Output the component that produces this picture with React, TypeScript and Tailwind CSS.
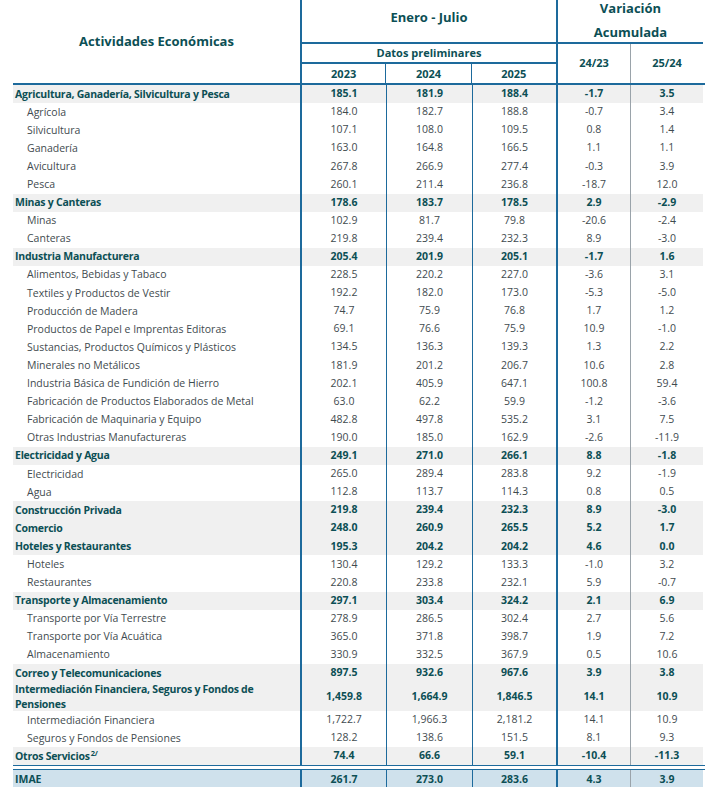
import React from 'react'

type Row = {
  name: string
  v: [string, string, string, string, string]
  bold?: boolean
  sup?: string
  tall?: boolean
}

const rows: Row[] = [
  { name: 'Agricultura, Ganadería, Silvicultura y Pesca', v: ['185.1', '181.9', '188.4', '-1.7', '3.5'], bold: true },
  { name: 'Agrícola', v: ['184.0', '182.7', '188.8', '-0.7', '3.4'] },
  { name: 'Silvicultura', v: ['107.1', '108.0', '109.5', '0.8', '1.4'] },
  { name: 'Ganadería', v: ['163.0', '164.8', '166.5', '1.1', '1.1'] },
  { name: 'Avicultura', v: ['267.8', '266.9', '277.4', '-0.3', '3.9'] },
  { name: 'Pesca', v: ['260.1', '211.4', '236.8', '-18.7', '12.0'] },
  { name: 'Minas y Canteras', v: ['178.6', '183.7', '178.5', '2.9', '-2.9'], bold: true },
  { name: 'Minas', v: ['102.9', '81.7', '79.8', '-20.6', '-2.4'] },
  { name: 'Canteras', v: ['219.8', '239.4', '232.3', '8.9', '-3.0'] },
  { name: 'Industria Manufacturera', v: ['205.4', '201.9', '205.1', '-1.7', '1.6'], bold: true },
  { name: 'Alimentos, Bebidas y Tabaco', v: ['228.5', '220.2', '227.0', '-3.6', '3.1'] },
  { name: 'Textiles y Productos de Vestir', v: ['192.2', '182.0', '173.0', '-5.3', '-5.0'] },
  { name: 'Producción de Madera', v: ['74.7', '75.9', '76.8', '1.7', '1.2'] },
  { name: 'Productos de Papel e Imprentas Editoras', v: ['69.1', '76.6', '75.9', '10.9', '-1.0'] },
  { name: 'Sustancias, Productos Químicos y Plásticos', v: ['134.5', '136.3', '139.3', '1.3', '2.2'] },
  { name: 'Minerales no Metálicos', v: ['181.9', '201.2', '206.7', '10.6', '2.8'] },
  { name: 'Industria Básica de Fundición de Hierro', v: ['202.1', '405.9', '647.1', '100.8', '59.4'] },
  { name: 'Fabricación de Productos Elaborados de Metal', v: ['63.0', '62.2', '59.9', '-1.2', '-3.6'] },
  { name: 'Fabricación de Maquinaria y Equipo', v: ['482.8', '497.8', '535.2', '3.1', '7.5'] },
  { name: 'Otras Industrias Manufactureras', v: ['190.0', '185.0', '162.9', '-2.6', '-11.9'] },
  { name: 'Electricidad y Agua', v: ['249.1', '271.0', '266.1', '8.8', '-1.8'], bold: true },
  { name: 'Electricidad', v: ['265.0', '289.4', '283.8', '9.2', '-1.9'] },
  { name: 'Agua', v: ['112.8', '113.7', '114.3', '0.8', '0.5'] },
  { name: 'Construcción Privada', v: ['219.8', '239.4', '232.3', '8.9', '-3.0'], bold: true },
  { name: 'Comercio', v: ['248.0', '260.9', '265.5', '5.2', '1.7'], bold: true },
  { name: 'Hoteles y Restaurantes', v: ['195.3', '204.2', '204.2', '4.6', '0.0'], bold: true },
  { name: 'Hoteles', v: ['130.4', '129.2', '133.3', '-1.0', '3.2'] },
  { name: 'Restaurantes', v: ['220.8', '233.8', '232.1', '5.9', '-0.7'] },
  { name: 'Transporte y Almacenamiento', v: ['297.1', '303.4', '324.2', '2.1', '6.9'], bold: true },
  { name: 'Transporte por Vía Terrestre', v: ['278.9', '286.5', '302.4', '2.7', '5.6'] },
  { name: 'Transporte por Vía Acuática', v: ['365.0', '371.8', '398.7', '1.9', '7.2'] },
  { name: 'Almacenamiento', v: ['330.9', '332.5', '367.9', '0.5', '10.6'] },
  { name: 'Correo y Telecomunicaciones', v: ['897.5', '932.6', '967.6', '3.9', '3.8'], bold: true },
  { name: 'Intermediación Financiera, Seguros y Fondos de Pensiones', v: ['1,459.8', '1,664.9', '1,846.5', '14.1', '10.9'], bold: true, tall: true },
  { name: 'Intermediación Financiera', v: ['1,722.7', '1,966.3', '2,181.2', '14.1', '10.9'] },
  { name: 'Seguros y Fondos de Pensiones', v: ['128.2', '138.6', '151.5', '8.1', '9.3'] },
  { name: 'Otros Servicios', v: ['74.4', '66.6', '59.1', '-10.4', '-11.3'], bold: true, sup: '2/' },
]

function DataRow({ row }: { row: Row }) {
  const text = row.bold ? 'font-bold text-[#0c4f55]' : 'text-[#3f4b4f]'
  return (
    <div
      className={`flex w-[690px] ${row.tall ? 'h-[29px]' : 'h-[18.1px]'} ${row.bold ? 'bg-[#f0f0f0]' : ''} ${text}`}
    >
      <div
        className={`flex w-[289px] shrink-0 items-center border-r-2 border-[#1d6a9c] leading-[15px] ${row.bold ? 'pl-[2px] pr-[34px] tracking-[-0.25px]' : 'pl-[14px]'}`}
      >
        <span>
          {row.name}
          {row.sup && <sup className="ml-[1px] text-[7.5px]">{row.sup}</sup>}
        </span>
      </div>
      <div className="flex w-[85px] shrink-0 items-center justify-center border-r border-[#1d6a9c]">{row.v[0]}</div>
      <div className="flex w-[86px] shrink-0 items-center justify-center border-r border-[#1d6a9c]">{row.v[1]}</div>
      <div className="flex w-[85px] shrink-0 items-center justify-center border-r-2 border-[#1d6a9c]">{row.v[2]}</div>
      <div className="flex w-[73px] shrink-0 items-center justify-center border-r border-[#9aa3aa]">{row.v[3]}</div>
      <div className="flex w-[72px] shrink-0 items-center justify-center">{row.v[4]}</div>
    </div>
  )
}

export default function App() {
  return (
    <div
      className="h-[787px] w-[705px] overflow-hidden bg-white pl-[13px] text-[10.5px]"
      style={{ fontFamily: '"Open Sans", "Noto Sans", sans-serif' }}
    >
      {/* encabezado */}
      <div className="flex w-[692px] border-b-2 border-[#1d6a9c] font-bold text-[#0c4f55]">
        <div className="flex h-[83px] w-[289px] shrink-0 items-center justify-center border-r-2 border-[#1d6a9c] text-[13px]">
          Actividades Económicas
        </div>
        <div className="flex w-[256px] shrink-0 flex-col border-r-2 border-[#1d6a9c]">
          <div className="flex h-[44px] items-center justify-center border-b-2 border-[#1d6a9c] pb-[6px] text-[13px]">
            Enero - Julio
          </div>
          <div className="flex h-[20px] items-center justify-center border-b-2 border-[#1d6a9c] text-[11px]">
            Datos preliminares
          </div>
          <div className="flex h-[19px] text-[11px]">
            <div className="flex w-[85px] items-center justify-center border-r border-[#1d6a9c] pt-[2px]">2023</div>
            <div className="flex w-[86px] items-center justify-center border-r border-[#1d6a9c] pt-[2px]">2024</div>
            <div className="flex w-[85px] items-center justify-center pt-[2px]">2025</div>
          </div>
        </div>
        <div className="flex w-[145px] shrink-0 flex-col">
          <div className="flex h-[44px] flex-col items-center justify-center border-b-2 border-[#1d6a9c] pb-[3px] text-[13px] leading-[24px]">
            <span>Variación</span>
            <span>Acumulada</span>
          </div>
          <div className="flex h-[39px] text-[11px]">
            <div className="flex w-[73px] items-center justify-center border-r border-[#9aa3aa]">24/23</div>
            <div className="flex w-[72px] items-center justify-center">25/24</div>
          </div>
        </div>
      </div>

      {rows.map((r) => (
        <DataRow key={r.name} row={r} />
      ))}

      {/* doble línea */}
      <div className="flex h-[5px] w-[692px] flex-col justify-between">
        <div className="h-[1px] bg-[#1d6a9c]" />
        <div className="h-[1px] bg-[#1d6a9c]" />
      </div>

      <div className="flex h-[18px] w-[690px] bg-[#cfe1ec] font-bold text-[#0c4f55]">
        <div className="flex w-[289px] shrink-0 items-center border-r-2 border-[#1d6a9c] pl-[2px]">IMAE</div>
        <div className="flex w-[85px] shrink-0 items-center justify-center border-r border-[#1d6a9c]">261.7</div>
        <div className="flex w-[86px] shrink-0 items-center justify-center border-r border-[#1d6a9c]">273.0</div>
        <div className="flex w-[85px] shrink-0 items-center justify-center border-r-2 border-[#1d6a9c]">283.6</div>
        <div className="flex w-[73px] shrink-0 items-center justify-center border-r border-[#9aa3aa]">4.3</div>
        <div className="flex w-[72px] shrink-0 items-center justify-center">3.9</div>
      </div>
    </div>
  )
}
